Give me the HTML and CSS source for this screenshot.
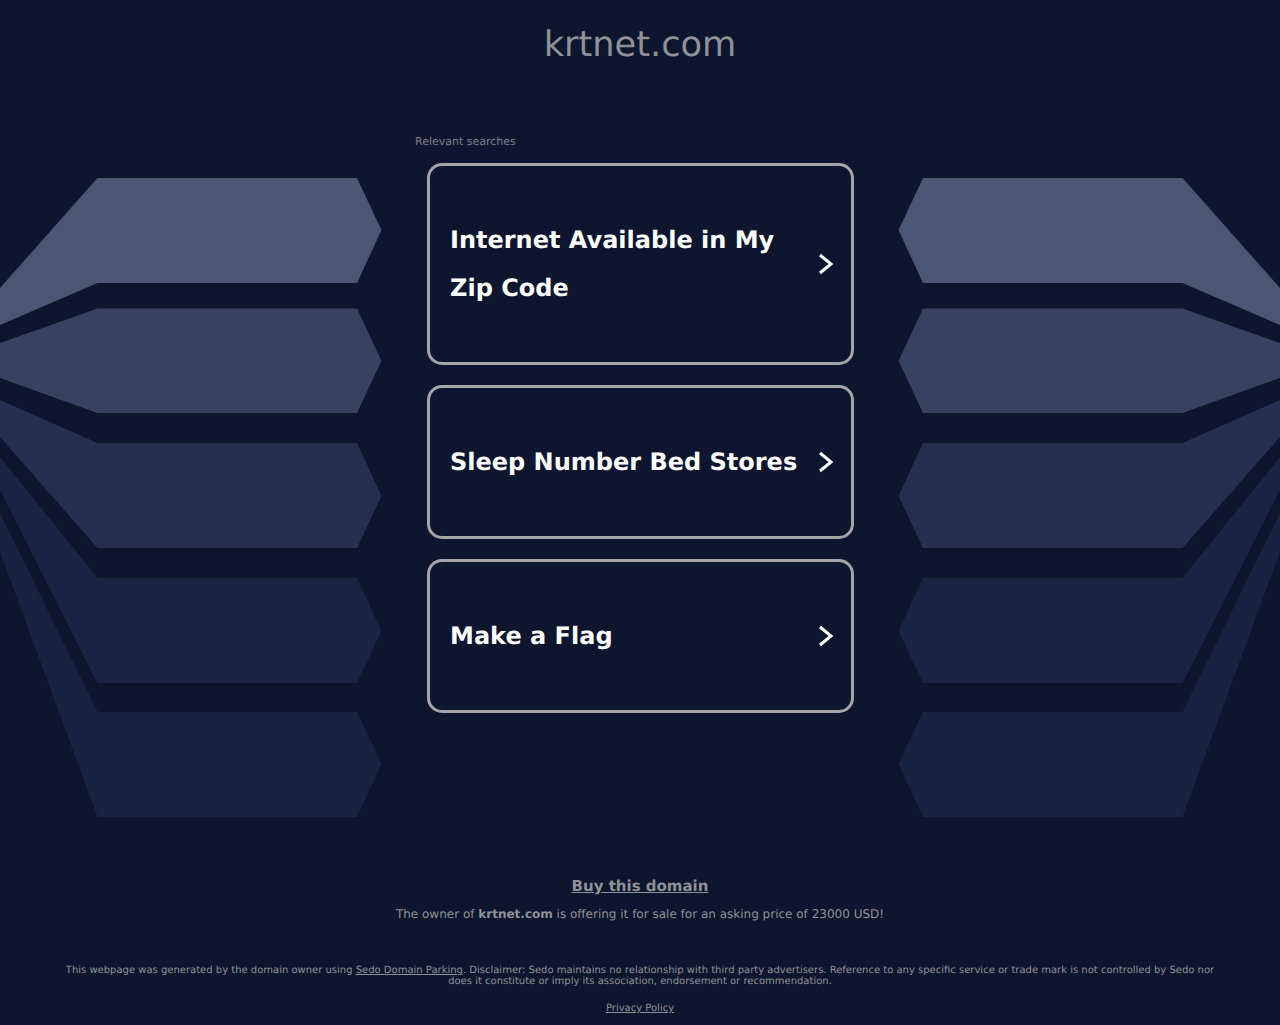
FILE: index.html
```html
<!DOCTYPE html>
<html lang="en">
<head>
  <meta charset="UTF-8">
  <meta name="viewport" content="width=device-width, initial-scale=1.0">
  <title>krtnet.com</title>
  <link rel="stylesheet" href="styles.css">
</head>
<body>
  <!-- Background shapes -->
  <svg class="bg-art" width="1280" height="1025" viewBox="0 0 1280 1025" aria-hidden="true">
    <defs>
      <g id="wing">
        <polygon fill="#182341" points="97.5,712 357,712 381.5,764 357,817 97.5,817 0,552 0,513"/>
        <polygon fill="#1a2545" points="97.5,578 357,578 381.5,631 357,683 97.5,683 0,490 0,457"/>
        <polygon fill="#252f50" points="97.5,443 357,443 381.5,496 357,548 97.5,548 0,437 0,400"/>
        <polygon fill="#374261" points="97.5,308.5 357,308.5 381.5,361 357,413 97.5,413 0,378 0,343"/>
        <polygon fill="#4b5675" points="97.5,178 357,178 381.5,230 357,283 97.5,283 0,325 0,288"/>
      </g>
    </defs>
    <use href="#wing"/>
    <use href="#wing" transform="matrix(-1 0 0 1 1280 0)"/>
  </svg>

  <header>
    <h1>krtnet.com</h1>
  </header>

  <main class="container">
    <p class="label">Relevant searches</p>

    <a class="card" href="#">
      <span class="card-text">Internet Available in My Zip Code</span>
      <svg class="chevron" width="16" height="22" viewBox="0 0 16 22"><path d="M2 2 L13 11 L2 20"/></svg>
    </a>
    <a class="card" href="#">
      <span class="card-text">Sleep Number Bed Stores</span>
      <svg class="chevron" width="16" height="22" viewBox="0 0 16 22"><path d="M2 2 L13 11 L2 20"/></svg>
    </a>
    <a class="card" href="#">
      <span class="card-text">Make a Flag</span>
      <svg class="chevron" width="16" height="22" viewBox="0 0 16 22"><path d="M2 2 L13 11 L2 20"/></svg>
    </a>
  </main>

  <section class="sale">
    <a class="buy" href="#">Buy this domain</a>
    <p>The owner of <b>krtnet.com</b> is offering it for sale for an asking price of 23000 USD!</p>
  </section>

  <footer>
    <p>This webpage was generated by the domain owner using <a href="#">Sedo Domain Parking</a>. Disclaimer: Sedo maintains no relationship with third party advertisers. Reference to any specific service or trade mark is not controlled by Sedo nor does it constitute or imply its association, endorsement or recommendation.</p>
    <a class="privacy" href="#">Privacy Policy</a>
  </footer>
</body>
</html>
```

FILE: styles.css
```css
* {
  margin: 0;
  padding: 0;
  box-sizing: border-box;
}

body {
  position: relative;
  height: 1025px;
  overflow: hidden;
  background-color: #0e152e;
  color: #909196;
  font-family: "DejaVu Sans", sans-serif;
  text-align: center;
  text-rendering: geometricPrecision;
}

a {
  color: inherit;
}

.bg-art {
  position: absolute;
  top: 0;
  left: 0;
}

header,
.container,
.sale,
footer {
  position: relative;
}

header {
  padding-top: 23px;
  height: 135px;
}

h1 {
  font-size: 35.2px;
  font-weight: normal;
  line-height: 44px;
}

.container {
  width: 450px;
  margin: 0 auto;
  text-align: left;
}

.label {
  font-size: 11px;
  line-height: 14px;
  color: #7d7f87;
  margin-bottom: 14px;
}

.card {
  display: flex;
  align-items: center;
  width: 427px;
  margin: 0 12px 20px;
  padding: 50px 20px;
  border: 3px solid #a5a5a8;
  border-radius: 15px;
  background-color: #0e152e;
  color: #fff;
  font-size: 24px;
  font-weight: bold;
  line-height: 48px;
  text-decoration: none;
}

.card-text {
  flex: 1;
}

.chevron {
  flex: none;
  margin-right: -3px;
}

.chevron path {
  fill: none;
  stroke: #fff;
  stroke-width: 3;
}

.sale {
  margin-top: 163px;
}

.buy {
  display: block;
  font-size: 15px;
  font-weight: bold;
  line-height: 20px;
}

.sale p {
  margin-top: 8px;
  font-size: 12px;
  line-height: 20px;
}

footer {
  width: 1160px;
  margin: 41px auto 0;
  font-size: 10px;
  line-height: 11px;
}

.privacy {
  display: block;
  margin-top: 16px;
}
```
